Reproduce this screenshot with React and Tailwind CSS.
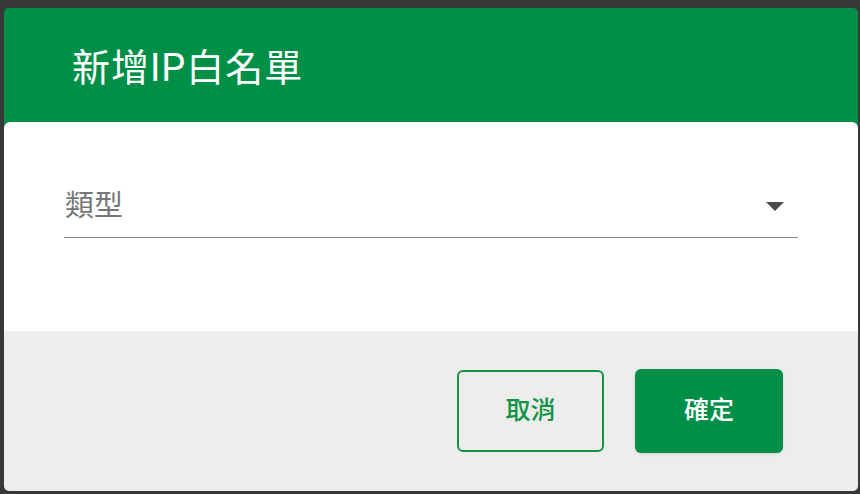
import React from "react";

const font = { fontFamily: 'Roboto, "Noto Sans CJK TC", sans-serif' };

const App = () => {
  return (
    <div
      className="w-[860px] h-[494px] bg-[#383838] pt-[8px] pl-[4px] pr-[2px] pb-[3px]"
      style={font}
    >
      <div className="h-full flex flex-col rounded-[5px] overflow-hidden bg-[#008f47]">
        <div className="h-[114px] flex items-center pl-[68px] pt-[6px]">
          <h2 className="text-white text-[38px] tracking-[1px] leading-none">
            新增IP白名單
          </h2>
        </div>
        <div className="h-[209px] bg-white rounded-t-[6px] px-[60px] pt-[64px]">
          <div className="flex items-center justify-between border-b border-[#8a8a8a] pb-[11px] pl-[1px] pr-[14px]">
            <span className="text-[29px] leading-[40px] text-[#767676]">類型</span>
            <span className="w-0 h-0 border-l-[9px] border-r-[9px] border-t-[9px] border-l-transparent border-r-transparent border-t-[#4a4a4a]" />
          </div>
        </div>
        <div className="flex-1 bg-[#ededed] flex items-center justify-end gap-[31px] pr-[75px]">
          <button className="w-[147px] h-[82px] rounded-[6px] border-2 border-[#119447] text-[#119447] text-[25px] font-medium">
            取消
          </button>
          <button className="w-[148px] h-[84px] rounded-[6px] bg-[#008f47] text-white text-[25px] font-medium shadow-sm">
            確定
          </button>
        </div>
      </div>
    </div>
  );
};

export default App;
